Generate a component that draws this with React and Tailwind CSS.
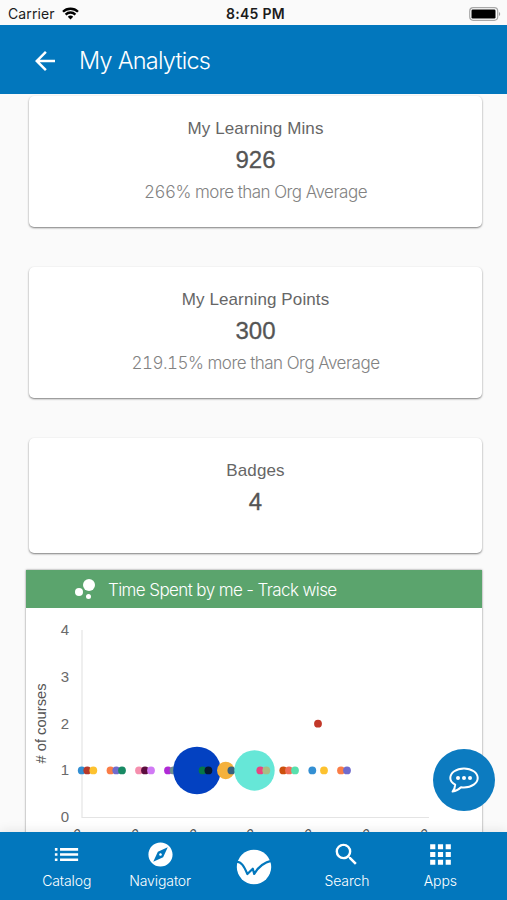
import { MdArrowBack, MdBubbleChart, MdList, MdExplore, MdSearch, MdApps } from "react-icons/md";

const cards = [
  { title: "My Learning Mins", value: "926", note: "266% more than Org Average" },
  { title: "My Learning Points", value: "300", note: "219.15% more than Org Average" },
  { title: "Badges", value: "4" },
];

// x, y, radius, color
const bubbles = [
  [55.7, 1, 3.9, "#338fd3"],
  [61.3, 1, 3.9, "#b83a2b"],
  [67.3, 1, 3.9, "#fdc22f"],
  [84.5, 1, 3.9, "#fa7d46"],
  [90.3, 1, 3.9, "#706bcd"],
  [96, 1, 3.9, "#188a64"],
  [113, 1, 3.9, "#f58fae"],
  [119, 1, 3.9, "#5c0d3e"],
  [125, 1, 3.9, "#d17af5"],
  [142, 1, 3.9, "#b02ad6"],
  [147.5, 1, 3.9, "#6f9190"],
  [171, 1, 23.8, "#0341c1"],
  [176.6, 1, 3.9, "#057747"],
  [182.4, 1, 3.9, "#06172f"],
  [199.7, 1, 8.7, "#f4b13d"],
  [205.4, 1, 3.9, "#39617d"],
  [228.5, 1, 20.2, "#66e7d7"],
  [234.3, 1, 3.9, "#e9447f"],
  [240.3, 1, 3.9, "#a9bd82"],
  [257.3, 1, 3.9, "#cc500d"],
  [263, 1, 3.9, "#ef6b58"],
  [269, 1, 3.9, "#58e0ad"],
  [286.3, 1, 3.9, "#338fd3"],
  [292, 2, 3.9, "#c23829"],
  [298, 1, 3.9, "#fdc22f"],
  [315, 1, 3.9, "#fa7d46"],
  [321, 1, 3.9, "#706bcd"],
];

const ticks = [0, 1, 2, 3, 4];
const labels = [55, 113, 171, 228, 286, 344, 402];

const yPos = (v) => 209.2 - v * 46.75;

function StatusBar() {
  return (
    <div className="h-[25px] shrink-0 bg-[#fafafa] grid grid-cols-3 items-center pl-2 pr-[6px] pt-[2px] text-[#1c1c1c]">
      <div className="flex items-center gap-[7px]">
        <span className="text-[14px] leading-4 font-['Inter',sans-serif] tracking-[0.1px]">Carrier</span>
        <svg width="17" height="13" viewBox="0 0 17 13" fill="none" stroke="#000" strokeWidth="2.3">
          <path d="M1 4.8C5 .7 12 .7 16 4.8" />
          <path d="M3.6 7.6c2.8-2.8 7-2.8 9.8 0" />
          <path d="M8.5 12.4 5.8 9.7c1.6-1.5 3.8-1.5 5.4 0z" fill="#000" stroke="none" />
        </svg>
      </div>
      <span className="pl-[2px] text-center text-[14px] leading-4 font-semibold whitespace-nowrap font-['Inter',sans-serif] tracking-[0.3px]">8:45 PM</span>
      <svg className="justify-self-end" width="32" height="14" viewBox="0 0 32 14">
        <rect x="0.7" y="0.7" width="28" height="12.6" rx="3.5" fill="#fff" stroke="#a8a8a8" strokeWidth="1.2" />
        <rect x="2.5" y="2.5" width="24" height="9" rx="1.2" fill="#000" />
        <path d="M30 5v4c1.6-.8 1.6-3.2 0-4z" fill="#a0a0a0" />
      </svg>
    </div>
  );
}

function Card({ title, value, note }) {
  return (
    <div className={`ml-[3px] mr-px rounded-[5px] bg-white shadow-[0_1px_2px_rgba(0,0,0,0.5)] pt-[21px] text-center ${note ? "h-[131px] mb-10" : "h-[115px] mb-[17px]"}`}>
      <p className="text-[17px] leading-[24px] text-[#666] tracking-[0.12px]">{title}</p>
      <p className="text-[24px] leading-[38px] text-[#555] [-webkit-text-stroke:0.3px_#555]">{value}</p>
      {note && <p className="mt-px text-[17px] leading-[24px] text-[#828282] font-light tabular-nums font-['Inter','Liberation_Sans',sans-serif] tracking-[-0.5px]">{note}</p>}
    </div>
  );
}

function TrackChart() {
  return (
    <svg className="block" width="456" height="240" viewBox="0 0 456 240" fontFamily="Liberation Sans, sans-serif">
      <path d="M56 22V209.5H403" fill="none" stroke="#e4e4e4" strokeWidth="1.2" />
      {ticks.map((t) => (
        <text key={t} x="39" y={yPos(t) + 5} fontSize="15" fill="#6a6a6a" textAnchor="middle">{t}</text>
      ))}
      <text transform="translate(20 115.500) rotate(-90)" fontSize="14.7" fill="#555" textAnchor="middle"># of courses</text>
      {bubbles.map(([x, y, r, color]) => (
        <circle key={`${x}-${y}`} cx={x} cy={yPos(y)} r={r} fill={color} />
      ))}
      {labels.map((x) => (
        <text key={x} transform={`translate(${x - 1} 231.5) rotate(-50)`} fontSize="14" fill="#555">2</text>
      ))}
    </svg>
  );
}

function NavItem({ icon, label }) {
  return (
    <div className="flex-1 flex flex-col items-center pt-[8px]">
      <div className="h-7 flex items-center justify-center">{icon}</div>
      <span className="mt-[3px] text-[14px] leading-5 font-light font-['Inter','Liberation_Sans',sans-serif] tracking-[-0.1px]">{label}</span>
    </div>
  );
}

export default function App() {
  return (
    <div className="relative w-[507px] h-[900px] flex flex-col overflow-hidden bg-[#fafafa] font-['Liberation_Sans',Arial,sans-serif]">
      <StatusBar />

      <header className="h-[69px] shrink-0 bg-[#0277bd] text-white flex items-center pl-[30px] pt-[3px]">
        <MdArrowBack size={30} />
        <h1 className="ml-[19px] -mt-px text-[23.5px] font-light font-['Inter','Liberation_Sans',sans-serif] tracking-[-0.75px]">My Analytics</h1>
      </header>

      <main className="flex-1 min-h-0 overflow-hidden px-[26px] pt-[2px] pr-[24px]">
        {cards.map((c) => (
          <Card key={c.title} {...c} />
        ))}

        <section className="bg-white mr-px shadow-[0_0_2px_rgba(0,0,0,0.5)]">
          <div className="h-[38px] bg-[#5ba46d] text-white flex items-center pl-[44px]">
            <MdBubbleChart size={30} />
            <h2 className="ml-[8px] pt-[3px] text-[17px] font-light font-['Inter','Liberation_Sans',sans-serif] tracking-[-0.6px]">Time Spent by me - Track wise</h2>
          </div>
          <TrackChart />
        </section>
      </main>

      <nav className="h-[68px] shrink-0 bg-[#0277bd] text-white flex px-5 shadow-[0_-2px_10px_rgba(0,0,0,0.08)]">
        <NavItem icon={<MdList size={31} />} label="Catalog" />
        <NavItem icon={<MdExplore size={29} />} label="Navigator" />
        <div className="flex-1 flex items-center justify-center pt-[2px]">
          <svg width="36" height="36" viewBox="0 0 36 36">
            <circle cx="18" cy="18" r="17.2" fill="#fff" />
            <path d="M0 12.8c5.500-.5 8 4.500 11.400 12.200l5.400-5.300 1.400 5.300C22 18 27 13.500 36 11.500" fill="none" stroke="#0277bd" strokeWidth="2.2" strokeLinejoin="round" />
          </svg>
        </div>
        <NavItem icon={<MdSearch size={29} />} label="Search" />
        <NavItem icon={<MdApps size={31} />} label="Apps" />
      </nav>

      <button className="absolute left-[433px] top-[749px] w-[62px] h-[62px] rounded-full bg-[#0c7bc0] flex items-center justify-center">
        <svg width="30" height="26" viewBox="0 0 30 26" fill="none" stroke="#fff" strokeWidth="2">
          <path d="M6.2 17.6C3 16 1.3 13.600 1.300 11 1.300 5.800 7.300 1.500 15 1.500S28.700 5.800 28.700 11 22.700 20.400 15 20.400c-1 0-2-.1-3-.2-2.300 2.300-4.800 3.800-8.400 4.300 1.600-2 2.500-4.200 2.600-6.900z" strokeLinejoin="round" />
          <g fill="#fff" stroke="none">
            <circle cx="9" cy="11" r="2" />
            <circle cx="15" cy="11" r="2" />
            <circle cx="21" cy="11" r="2" />
          </g>
        </svg>
      </button>
    </div>
  );
}
